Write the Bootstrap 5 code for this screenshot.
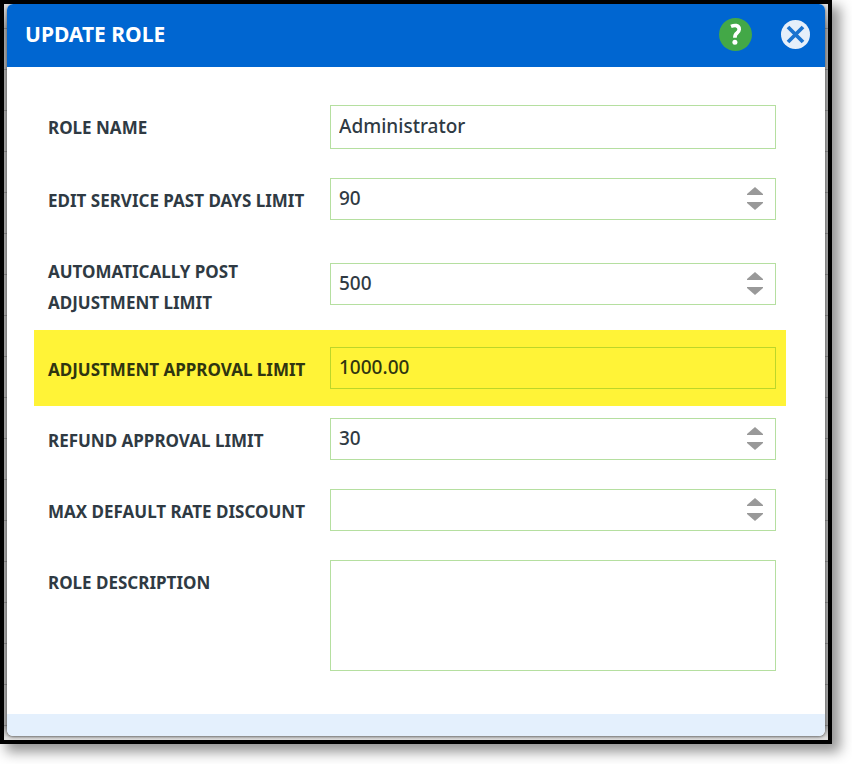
<!DOCTYPE html>
<html lang="en">
<head>
<meta charset="utf-8">
<meta name="viewport" content="width=device-width, initial-scale=1">
<title>Update Role</title>
<link href="https://cdn.jsdelivr.net/npm/bootstrap@5.3.0/dist/css/bootstrap.min.css" rel="stylesheet">
<style>
  body { background: #fff; color: #2f3a43; font-family: "Noto Sans", "Open Sans", sans-serif; padding: 0 20px 20px 0; }
  .backdrop-frame {
    border: 4px solid #000; padding: 0 3px 4px;
    background:
      linear-gradient(#ddd, rgba(221, 221, 221, 0) 24px),
      linear-gradient(to top, #ddd 2px, rgba(221, 221, 221, 0) 14px),
      repeating-linear-gradient(#a0a0a0 0 24px, #808080 24px 25px, #a0a0a0 25px 41px);
    box-shadow: 7px 7px 12px 1px rgba(0, 0, 0, .42);
  }
  .dialog { border-radius: 6px; overflow: hidden; box-shadow: 0 1px 3px rgba(0, 0, 0, .5); }
  .dialog-head { background: #0066d1; color: #fff; height: 63px; padding: 0 15px 2px 18px; gap: 29px; }
  .dialog-head h1 { font-size: 21px; font-weight: 700; }
  .dialog-foot { background: #e4f0fd; height: 22px; }
  .role-form { padding: 38px 39px 43px 27px; }
  .field { display: grid; grid-template-columns: 282px minmax(0, 1fr); padding: 0 10px 0 14px; margin-bottom: 29px; align-items: start; }
  .field:last-child { margin-bottom: 0; }
  .field label { font-size: 17px; font-weight: 700; line-height: 31px; padding-top: 7px; }
  .field.two-line { margin-bottom: 12px; }
  .field.two-line .entry { margin-top: 14px; }
  .field.marked { background: #fff337; color: #2f3510; padding-top: 17px; padding-bottom: 17px; margin-bottom: 12px; }
  .entry { border: 1px solid #b5dfa0; height: 42px; }
  .entry.tall { height: 44px; }
  .marked .entry { border-color: #bcd629; }
  .entry input, textarea.entry { font-size: 19px; font-weight: 500; line-height: 28px; color: inherit; background: transparent; }
  .entry input { padding: 0 8px 2px; appearance: textfield; -moz-appearance: textfield; min-width: 0; }
  .entry input::-webkit-inner-spin-button, .entry input::-webkit-outer-spin-button { appearance: none; margin: 0; }
  textarea.entry { height: 111px; padding: 6px 8px; resize: none; }
  .steps { gap: 7px; padding: 0 12px 2px 0; }
  .steps svg, .icon-btn svg { display: block; }
</style>
<script src="https://cdn.jsdelivr.net/npm/bootstrap@5.3.0/dist/js/bootstrap.bundle.min.js"></script>
</head>
<body>
<svg class="d-none" aria-hidden="true">
  <symbol id="up" viewBox="0 0 16 8"><path fill="#999" d="M8 0 L16 7 V8 H0 V7 Z"/></symbol>
  <symbol id="down" viewBox="0 0 16 8"><path fill="#999" d="M0 0 H16 V1 L8 8 L0 1 Z"/></symbol>
</svg>
<div class="backdrop-frame">
  <main class="dialog bg-white" role="dialog" aria-labelledby="dialog-title">
    <header class="dialog-head d-flex align-items-center">
      <h1 id="dialog-title" class="m-0 me-auto">UPDATE ROLE</h1>
      <button type="button" class="icon-btn border-0 bg-transparent p-0" aria-label="Help">
        <svg width="33" height="33" viewBox="0 0 33 33"><circle cx="16.500" cy="16.500" r="16.500" fill="#43a847"/><path d="M12 8.400 Q15 7.200 17.300 7.600 Q20.300 8.200 20.200 11.500 Q20.100 13.400 18 15 Q15.800 16.600 15.900 19.800" fill="none" stroke="#fff" stroke-width="3.700"/><circle cx="15.900" cy="24.200" r="2.500" fill="#fff"/></svg>
      </button>
      <button type="button" class="icon-btn border-0 bg-transparent p-0" aria-label="Close">
        <svg width="29" height="29" viewBox="0 0 29 29"><circle cx="14.500" cy="14.500" r="14.500" fill="#e5effa"/><path d="M7 7 L22 22 M22 7 L7 22" stroke="#1b73cf" stroke-width="3.800"/></svg>
      </button>
    </header>
    <form class="role-form">
      <div class="field">
        <label for="name">ROLE NAME</label>
        <div class="entry tall d-flex"><input id="name" type="text" class="border-0 flex-grow-1" value="Administrator"></div>
      </div>
      <div class="field">
        <label for="days">EDIT SERVICE PAST DAYS LIMIT</label>
        <div class="entry d-flex"><input id="days" type="number" class="border-0 flex-grow-1" value="90">
          <div class="steps d-flex flex-column justify-content-center">
            <button type="button" class="border-0 bg-transparent p-0" aria-label="Increase"><svg width="16" height="8"><use href="#up"/></svg></button>
            <button type="button" class="border-0 bg-transparent p-0" aria-label="Decrease"><svg width="16" height="8"><use href="#down"/></svg></button>
          </div>
        </div>
      </div>
      <div class="field two-line">
        <label for="post">AUTOMATICALLY POST<br>ADJUSTMENT LIMIT</label>
        <div class="entry d-flex"><input id="post" type="number" class="border-0 flex-grow-1" value="500">
          <div class="steps d-flex flex-column justify-content-center">
            <button type="button" class="border-0 bg-transparent p-0" aria-label="Increase"><svg width="16" height="8"><use href="#up"/></svg></button>
            <button type="button" class="border-0 bg-transparent p-0" aria-label="Decrease"><svg width="16" height="8"><use href="#down"/></svg></button>
          </div>
        </div>
      </div>
      <div class="field marked">
        <label for="approval">ADJUSTMENT APPROVAL LIMIT</label>
        <div class="entry d-flex"><input id="approval" type="text" class="border-0 flex-grow-1" value="1000.00"></div>
      </div>
      <div class="field">
        <label for="refund">REFUND APPROVAL LIMIT</label>
        <div class="entry d-flex"><input id="refund" type="number" class="border-0 flex-grow-1" value="30">
          <div class="steps d-flex flex-column justify-content-center">
            <button type="button" class="border-0 bg-transparent p-0" aria-label="Increase"><svg width="16" height="8"><use href="#up"/></svg></button>
            <button type="button" class="border-0 bg-transparent p-0" aria-label="Decrease"><svg width="16" height="8"><use href="#down"/></svg></button>
          </div>
        </div>
      </div>
      <div class="field">
        <label for="discount">MAX DEFAULT RATE DISCOUNT</label>
        <div class="entry d-flex"><input id="discount" type="number" class="border-0 flex-grow-1">
          <div class="steps d-flex flex-column justify-content-center">
            <button type="button" class="border-0 bg-transparent p-0" aria-label="Increase"><svg width="16" height="8"><use href="#up"/></svg></button>
            <button type="button" class="border-0 bg-transparent p-0" aria-label="Decrease"><svg width="16" height="8"><use href="#down"/></svg></button>
          </div>
        </div>
      </div>
      <div class="field">
        <label for="description">ROLE DESCRIPTION</label>
        <textarea id="description" class="entry w-100 d-block"></textarea>
      </div>
    </form>
    <footer class="dialog-foot"></footer>
  </main>
</div>
</body>
</html>
